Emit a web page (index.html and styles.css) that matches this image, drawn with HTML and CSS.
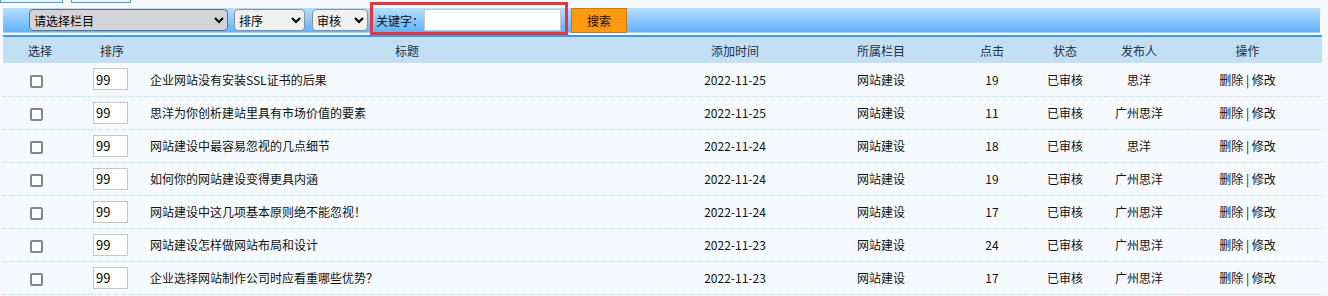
FILE: index.html
```html
<!DOCTYPE html>
<html lang="zh-CN">
<head>
    <meta charset="UTF-8">
    <title>文章列表</title>
    <link rel="stylesheet" href="styles.css">
</head>
<body>

    <!-- Pestañas superiores (cortadas) -->
    <div class="tabs">
        <span class="tab tab--a"></span>
        <span class="tab tab--b"></span>
    </div>

    <!-- Barra de búsqueda -->
    <div class="toolbar">
        <select class="sel sel--cat">
            <option>请选择栏目</option>
        </select>
        <select class="sel sel--sort">
            <option>排序</option>
        </select>
        <select class="sel sel--audit">
            <option>审核</option>
        </select>
        <span class="kw">
            <label>关键字：</label>
            <input type="text" class="kw__input">
        </span>
        <button class="btn-search">搜索</button>
    </div>

    <!-- Lista -->
    <table class="list">
        <colgroup>
            <col style="width:74px">
            <col style="width:70px">
            <col style="width:520px">
            <col style="width:136px">
            <col style="width:156px">
            <col style="width:66px">
            <col style="width:80px">
            <col style="width:68px">
            <col>
        </colgroup>
        <thead>
            <tr>
                <th>选择</th>
                <th>排序</th>
                <th>标题</th>
                <th>添加时间</th>
                <th>所属栏目</th>
                <th>点击</th>
                <th>状态</th>
                <th>发布人</th>
                <th>操作</th>
            </tr>
        </thead>
        <tbody>
            <tr>
                <td class="chk"><input type="checkbox"></td>
                <td><input type="text" class="ord" value="99"></td>
                <td class="title">企业网站没有安装SSL证书的后果</td>
                <td>2022-11-25</td>
                <td>网站建设</td>
                <td>19</td>
                <td>已审核</td>
                <td>思洋</td>
                <td class="ops"><a href="#">删除</a> | <a href="#">修改</a></td>
            </tr>
            <tr>
                <td class="chk"><input type="checkbox"></td>
                <td><input type="text" class="ord" value="99"></td>
                <td class="title">思洋为你创析建站里具有市场价值的要素</td>
                <td>2022-11-25</td>
                <td>网站建设</td>
                <td>11</td>
                <td>已审核</td>
                <td>广州思洋</td>
                <td class="ops"><a href="#">删除</a> | <a href="#">修改</a></td>
            </tr>
            <tr>
                <td class="chk"><input type="checkbox"></td>
                <td><input type="text" class="ord" value="99"></td>
                <td class="title">网站建设中最容易忽视的几点细节</td>
                <td>2022-11-24</td>
                <td>网站建设</td>
                <td>18</td>
                <td>已审核</td>
                <td>思洋</td>
                <td class="ops"><a href="#">删除</a> | <a href="#">修改</a></td>
            </tr>
            <tr>
                <td class="chk"><input type="checkbox"></td>
                <td><input type="text" class="ord" value="99"></td>
                <td class="title">如何你的网站建设变得更具内涵</td>
                <td>2022-11-24</td>
                <td>网站建设</td>
                <td>19</td>
                <td>已审核</td>
                <td>广州思洋</td>
                <td class="ops"><a href="#">删除</a> | <a href="#">修改</a></td>
            </tr>
            <tr>
                <td class="chk"><input type="checkbox"></td>
                <td><input type="text" class="ord" value="99"></td>
                <td class="title">网站建设中这几项基本原则绝不能忽视！</td>
                <td>2022-11-24</td>
                <td>网站建设</td>
                <td>17</td>
                <td>已审核</td>
                <td>广州思洋</td>
                <td class="ops"><a href="#">删除</a> | <a href="#">修改</a></td>
            </tr>
            <tr>
                <td class="chk"><input type="checkbox"></td>
                <td><input type="text" class="ord" value="99"></td>
                <td class="title">网站建设怎样做网站布局和设计</td>
                <td>2022-11-23</td>
                <td>网站建设</td>
                <td>24</td>
                <td>已审核</td>
                <td>广州思洋</td>
                <td class="ops"><a href="#">删除</a> | <a href="#">修改</a></td>
            </tr>
            <tr>
                <td class="chk"><input type="checkbox"></td>
                <td><input type="text" class="ord" value="99"></td>
                <td class="title">企业选择网站制作公司时应看重哪些优势？</td>
                <td>2022-11-23</td>
                <td>网站建设</td>
                <td>17</td>
                <td>已审核</td>
                <td>广州思洋</td>
                <td class="ops"><a href="#">删除</a> | <a href="#">修改</a></td>
            </tr>
        </tbody>
    </table>

</body>
</html>
```

FILE: styles.css
```css
* {
    box-sizing: border-box;
}
body {
    margin: 0;
    padding: 0 0 0 3px;
    background-color: #f6faff;
    font-family: "Noto Sans CJK SC", sans-serif;
    font-size: 12px;
    color: #111;
}

/* Pestañas */
.tabs {
    display: flex;
    height: 3px;
    margin-left: -3px;
}
.tab {
    height: 3px;
    border: 1px solid #4e9fe2;
    border-top: none;
    background-color: #eaf4fe;
}
.tab--a {
    width: 63px;
}
.tab--b {
    width: 60px;
    margin-left: 8px;
}

/* Barra */
.toolbar {
    display: flex;
    align-items: center;
    width: 1317px;
    height: 25px;
    margin-top: 5px;
    padding-left: 26px;
    background: linear-gradient(#b5e0fe, #63b2fa);
    border-bottom: 1px solid #9fd0fb;
}
.sel {
    height: 22px;
    font-family: "Noto Sans CJK SC", sans-serif;
    font-size: 12px;
    color: #000;
    border: 1px solid #8f8f98;
    border-radius: 4px;
    background-color: #f0f0f0;
    padding: 0;
}
.sel--cat {
    width: 199px;
    background-color: #d4d4d8;
    border-color: #6d6d78;
}
.sel--sort {
    width: 71px;
    margin-left: 6px;
}
.sel--audit {
    width: 56px;
    margin-left: 7px;
}
.kw {
    position: relative;
    display: flex;
    align-items: center;
    margin-left: 8px;
}
.kw::after {
    content: "";
    position: absolute;
    top: -7px;
    bottom: -4px;
    left: -6px;
    right: -7px;
    border: 3px solid #e8353b;
}
.kw label {
    color: #111;
}
.kw__input {
    width: 137px;
    height: 22px;
    border: 1px solid #c8c8c8;
    background-color: #fff;
}
.btn-search {
    width: 56px;
    height: 25px;
    margin-left: 10px;
    background-color: #ff9910;
    border: 1px solid #c9781c;
    font-family: "Noto Sans CJK SC", sans-serif;
    font-size: 12px;
    color: #111;
    padding: 0;
}

/* Tabla */
.list {
    width: 1319px;
    margin-top: 2px;
    border-collapse: collapse;
    table-layout: fixed;
    border-top: 2px solid #3a9aea;
}
.list th {
    height: 27px;
    background-color: #c2dff4;
    font-weight: normal;
    color: #223044;
    text-align: center;
    padding: 0;
}
.list td {
    height: 33px;
    text-align: center;
    padding: 0;
    border-bottom: 1px dotted #bcdcf2;
    color: #111;
}
.list td.chk {
    padding-right: 7px;
}
.list td.chk input {
    appearance: none;
    margin: 0;
    width: 13px;
    height: 13px;
    vertical-align: middle;
    border: 2px solid #85858f;
    border-radius: 2px;
    background-color: #fff;
}
.ord {
    width: 35px;
    height: 22px;
    border: 1px solid #c6c6c6;
    background-color: #fff;
    font-family: "Noto Sans CJK SC", sans-serif;
    font-size: 13px;
    padding: 0 2px;
    margin-left: -3px;
}
.list td.title {
    text-align: left;
    padding-left: 3px;
}
.ops {
    color: #5a0a5a;
}
.ops a {
    color: #111;
    text-decoration: none;
}
```
